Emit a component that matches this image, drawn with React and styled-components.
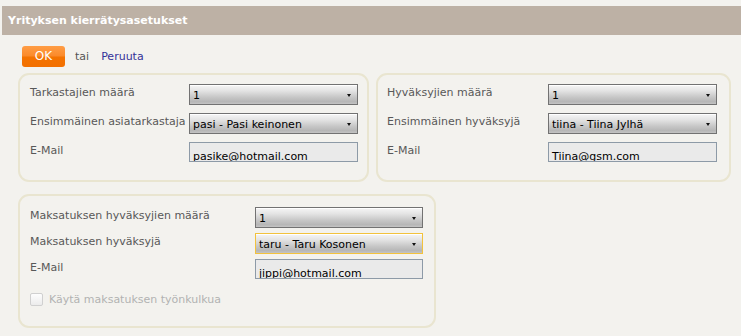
import React from "react";
import styled, { createGlobalStyle } from "styled-components";

const GlobalStyle = createGlobalStyle`
  html, body {
    margin: 0;
    padding: 0;
    background: #f3f2ee;
  }
  body {
    font-family: "DejaVu Sans", Verdana, sans-serif;
    font-size: 11px;
    color: #555;
  }
`;

const Page = styled.div`
  padding: 6px 0 0 2px;
`;

const Header = styled.div`
  height: 29px;
  line-height: 29px;
  padding-left: 6px;
  background: #bdb1a5;
  color: #fff;
  font-weight: bold;
  font-size: 11px;
`;

const Toolbar = styled.div`
  display: flex;
  align-items: center;
  margin-top: 11px;
  padding-left: 20px;
`;

const OkButton = styled.button`
  width: 43px;
  height: 21px;
  padding: 0;
  border: 0;
  border-radius: 3px;
  background: linear-gradient(#ff9d45 0%, #fb8a2a 48%, #f47300 52%, #f27000 100%);
  color: #fff;
  font-family: "DejaVu Sans", Verdana, sans-serif;
  font-size: 12px;
  line-height: 21px;
  cursor: pointer;
  margin-right: 10px;
`;

const Or = styled.span`
  color: #555;
  margin-right: 12px;
`;

const CancelLink = styled.a`
  color: #333399;
  text-decoration: none;
  cursor: pointer;
`;

const Panels = styled.div`
  padding-left: 16px;
  margin-top: 6px;
`;

const TopRow = styled.div`
  display: flex;
  gap: 7px;
`;

const Panel = styled.div`
  box-sizing: border-box;
  width: ${(p) => p.$width}px;
  border: 2px solid #e9e5d0;
  border-radius: 11px;
  padding: ${(p) => p.$pad};
  margin-top: ${(p) => p.$mt || 0}px;
  display: grid;
  grid-template-columns: ${(p) => p.$labelCol}px ${(p) => p.$fieldCol}px;
  row-gap: ${(p) => p.$gap}px;
  align-items: start;
`;

const Label = styled.div`
  padding-top: 2px;
  line-height: 13px;
  color: #585858;
  white-space: nowrap;
`;

const Select = styled.div`
  position: relative;
  box-sizing: border-box;
  height: 21px;
  border: 1px solid ${(p) => (p.$focused ? "#f2c23c" : "#727272")};
  box-shadow: inset 0 1px 0 #fff;
  background: linear-gradient(#f6f6f6 0%, #e4e4e4 30%, #c6c6c6 65%, #b6b6b6 88%, #c4c4c4 100%);
  color: #000;
  line-height: 21px;
  padding-left: 3px;
  white-space: nowrap;
  overflow: hidden;

  &::after {
    content: "";
    position: absolute;
    right: 6px;
    top: 9px;
    border-left: 2.5px solid transparent;
    border-right: 2.5px solid transparent;
    border-top: 3px solid #111;
  }
`;

const EmailField = styled.div`
  box-sizing: border-box;
  height: 20px;
  border: 1px solid #8d9aa7;
  background: #eaeaea;
  color: #000;
  padding: 7px 0 0 3px;
  line-height: 13px;
  white-space: nowrap;
  overflow: hidden;
`;

const CheckRow = styled.label`
  grid-column: 1 / -1;
  display: flex;
  align-items: center;
  margin-top: 9px;
  color: #b2b2b2;
  font-size: 11px;
`;

const CheckBox = styled.span`
  box-sizing: border-box;
  width: 13px;
  height: 13px;
  border: 1px solid #d0d0d0;
  border-radius: 2px;
  background: linear-gradient(#fdfdfd, #ececec);
  margin-right: 6px;
`;

function Row({ label, children }) {
  return (
    <>
      <Label>{label}</Label>
      {children}
    </>
  );
}

export default function App() {
  return (
    <>
      <GlobalStyle />
      <Page>
        <Header>Yrityksen kierrätysasetukset</Header>
        <Toolbar>
          <OkButton>OK</OkButton>
          <Or>tai</Or>
          <CancelLink>Peruuta</CancelLink>
        </Toolbar>
        <Panels>
          <TopRow>
            <Panel $width={351} $pad="9px 10px 18px 10px" $labelCol={159} $fieldCol={169} $gap={8}>
              <Row label="Tarkastajien määrä">
                <Select>1</Select>
              </Row>
              <Row label="Ensimmäinen asiatarkastaja">
                <Select>pasi - Pasi keinonen</Select>
              </Row>
              <Row label="E-Mail">
                <EmailField>pasike@hotmail.com</EmailField>
              </Row>
            </Panel>
            <Panel $width={355} $pad="9px 12px 18px 9px" $labelCol={161} $fieldCol={169} $gap={8}>
              <Row label="Hyväksyjien määrä">
                <Select>1</Select>
              </Row>
              <Row label="Ensimmäinen hyväksyjä">
                <Select>tiina - Tiina Jylhä</Select>
              </Row>
              <Row label="E-Mail">
                <EmailField>Tiina@gsm.com</EmailField>
              </Row>
            </Panel>
          </TopRow>
          <Panel $width={418} $mt={12} $pad="11px 11px 20px 10px" $labelCol={225} $fieldCol={168} $gap={5}>
            <Row label="Maksatuksen hyväksyjien määrä">
              <Select>1</Select>
            </Row>
            <Row label="Maksatuksen hyväksyjä">
              <Select $focused>taru - Taru Kosonen</Select>
            </Row>
            <Row label="E-Mail">
              <EmailField>jippi@hotmail.com</EmailField>
            </Row>
            <CheckRow>
              <CheckBox />
              Käytä maksatuksen työnkulkua
            </CheckRow>
          </Panel>
        </Panels>
      </Page>
    </>
  );
}
